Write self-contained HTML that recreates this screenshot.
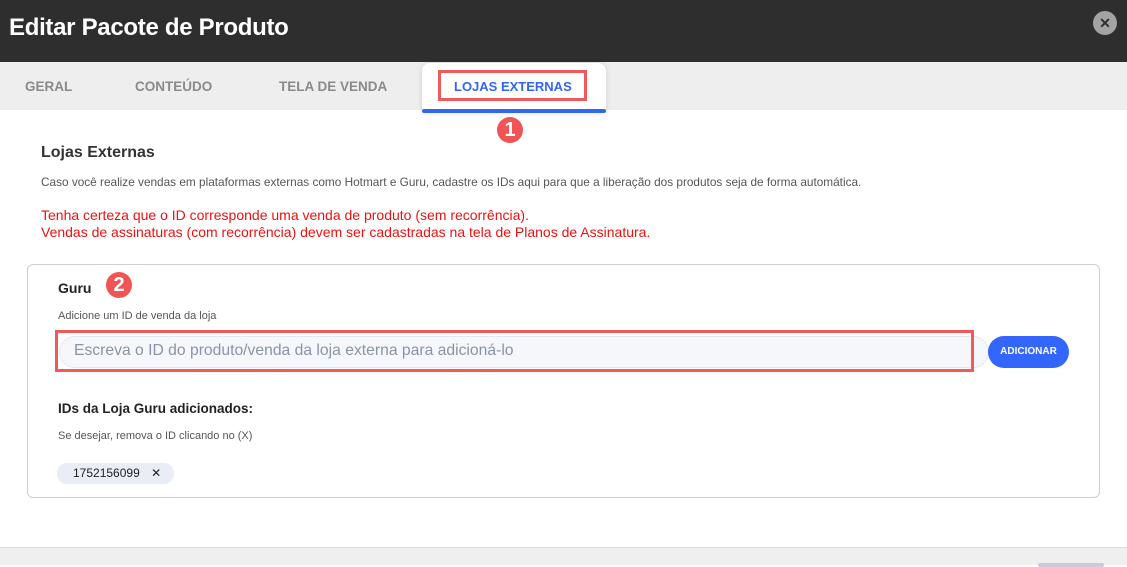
<!DOCTYPE html>
<html><head><meta charset="utf-8"><style>
*{margin:0;padding:0;box-sizing:border-box}
body{width:1127px;height:565px;overflow:hidden;background:#fff;font-family:"Liberation Sans",sans-serif;position:relative}
.abs{position:absolute;white-space:nowrap}
</style></head><body>
<div class="abs" style="left:0;top:0;width:1127px;height:62px;background:#2e2e2e"></div>
<div class="abs" style="left:9px;top:14px;color:#fff;font-size:24px;font-weight:bold;letter-spacing:-0.3px">Editar Pacote de Produto</div>
<div class="abs" style="left:1093px;top:11px;width:24px;height:24px;border-radius:50%;background:#a3a3a3;color:#2e2e2e;font-size:14px;font-weight:bold;text-align:center;line-height:24px">✕</div>
<div class="abs" style="left:0;top:62px;width:1127px;height:48px;background:#eeeeee"></div>
<div class="abs" style="left:25px;top:79px;color:#8a8a8a;font-size:13.5px;font-weight:bold">GERAL</div>
<div class="abs" style="left:135px;top:79px;color:#8a8a8a;font-size:13.5px;font-weight:bold">CONTEÚDO</div>
<div class="abs" style="left:279px;top:79px;color:#8a8a8a;font-size:13.5px;font-weight:bold">TELA DE VENDA</div>
<div class="abs" style="left:422px;top:63px;width:184px;height:50px;background:#fff;border-radius:8px 8px 0 0;box-shadow:0 0 6px rgba(0,0,0,0.12)"></div>
<div class="abs" style="left:422px;top:109px;width:184px;height:4px;background:#3366ee;border-radius:2px"></div>
<div class="abs" style="left:438px;top:70px;width:149px;height:31px;border:3px solid #f05a5a"></div>
<div class="abs" style="left:454px;top:79px;color:#3366ee;font-size:13px;font-weight:bold">LOJAS EXTERNAS</div>
<div class="abs" style="left:497px;top:117px;width:26px;height:26px;border-radius:50%;background:#ef5555;color:#fff;font-size:20px;font-weight:bold;text-align:center;line-height:26px">1</div>
<div class="abs" style="left:41px;top:144px;color:#333;font-size:16px;font-weight:bold">Lojas Externas</div>
<div class="abs" style="left:41px;top:175px;color:#555;font-size:11.8px">Caso você realize vendas em plataformas externas como Hotmart e Guru, cadastre os IDs aqui para que a liberação dos produtos seja de forma automática.</div>
<div class="abs" style="left:41px;top:207px;color:#ee1111;font-size:14px;line-height:17px">Tenha certeza que o ID corresponde uma venda de produto (sem recorrência).<br>Vendas de assinaturas (com recorrência) devem ser cadastradas na tela de Planos de Assinatura.</div>
<div class="abs" style="left:27px;top:264px;width:1073px;height:234px;border:1px solid #cfcfcf;border-radius:6px"></div>
<div class="abs" style="left:58px;top:280px;color:#222;font-size:14px;font-weight:bold">Guru</div>
<div class="abs" style="left:106px;top:272px;width:26px;height:26px;border-radius:50%;background:#ef5555;color:#fff;font-size:20px;font-weight:bold;text-align:center;line-height:26px">2</div>
<div class="abs" style="left:58px;top:310px;color:#555;font-size:11px">Adicione um ID de venda da loja</div>
<div class="abs" style="left:59px;top:336px;width:930px;height:32px;background:#f5f7fb;border:1px solid #e3e7ef;border-radius:16px"></div>
<div class="abs" style="left:55px;top:330px;width:919px;height:42px;border:3px solid #f05a5a"></div>
<div class="abs" style="left:74px;top:342px;color:#8a94a6;font-size:15.7px">Escreva o ID do produto/venda da loja externa para adicioná-lo</div>
<div class="abs" style="left:988px;top:336px;width:81px;height:32px;background:#3366ff;border-radius:16px;color:#fff;font-size:10px;font-weight:bold;text-align:center;line-height:32px">ADICIONAR</div>
<div class="abs" style="left:58px;top:401px;color:#222;font-size:13.5px;font-weight:bold">IDs da Loja Guru adicionados:</div>
<div class="abs" style="left:58px;top:430px;color:#555;font-size:11px">Se desejar, remova o ID clicando no (X)</div>
<div class="abs" style="left:57px;top:463px;width:117px;height:21px;background:#e9edf5;border-radius:10px;color:#222;font-size:12px;line-height:21px;padding-left:16px">1752156099 <span style="margin-left:8px">✕</span></div>
<div class="abs" style="left:0;top:547px;width:1127px;height:18px;background:#efefef;border-top:1px solid #dcdcdc"></div>
<div class="abs" style="left:1038px;top:563px;width:66px;height:4px;background:#c5cbe0;border-radius:3px"></div>
</body></html>
